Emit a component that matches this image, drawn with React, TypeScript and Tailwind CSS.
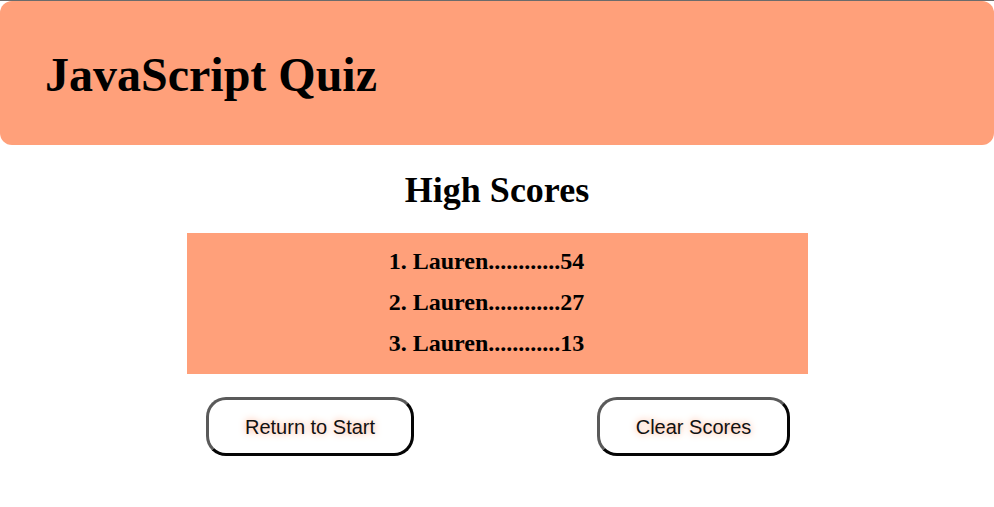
const scores = [
  { name: 'Lauren', score: 54 },
  { name: 'Lauren', score: 27 },
  { name: 'Lauren', score: 13 },
]

export default function App() {
  return (
    <div className="min-h-[507px] bg-white border-t border-[#6b6b6b] font-['Liberation_Serif',serif] text-black">
      <header className="h-[144px] bg-[#ffa07a] rounded-[12px] flex items-center pl-[45px] pt-[4px]">
        <h1 className="text-[48px] font-bold leading-none">JavaScript Quiz</h1>
      </header>

      <h2 className="mt-[25px] text-center text-[36px] font-bold leading-[40px]">High Scores</h2>

      <ol className="ml-[187px] mr-[186px] mt-[23px] h-[141px] bg-[#ffa07a] flex flex-col items-center justify-center gap-[13px] pr-[22px] pb-[4px]">
        {scores.map((s, i) => (
          <li key={i} className="text-[24px] font-bold leading-[28px]">
            {i + 1}. {s.name}............{s.score}
          </li>
        ))}
      </ol>

      <div className="flex mt-[23px] font-['Liberation_Sans',Arial,sans-serif]">
        <button className="ml-[206px] w-[208px] h-[59px] rounded-[20px] border-[3px] border-[#5a5a5a] bg-white text-[20px] text-[#111] [text-shadow:0_0_7px_#ffa07a] [border-style:outset]">
          Return to Start
        </button>
        <button className="ml-[183px] w-[193px] h-[59px] rounded-[20px] border-[3px] border-[#5a5a5a] bg-white text-[20px] text-[#111] [text-shadow:0_0_7px_#ffa07a] [border-style:outset]">
          Clear Scores
        </button>
      </div>
    </div>
  )
}
